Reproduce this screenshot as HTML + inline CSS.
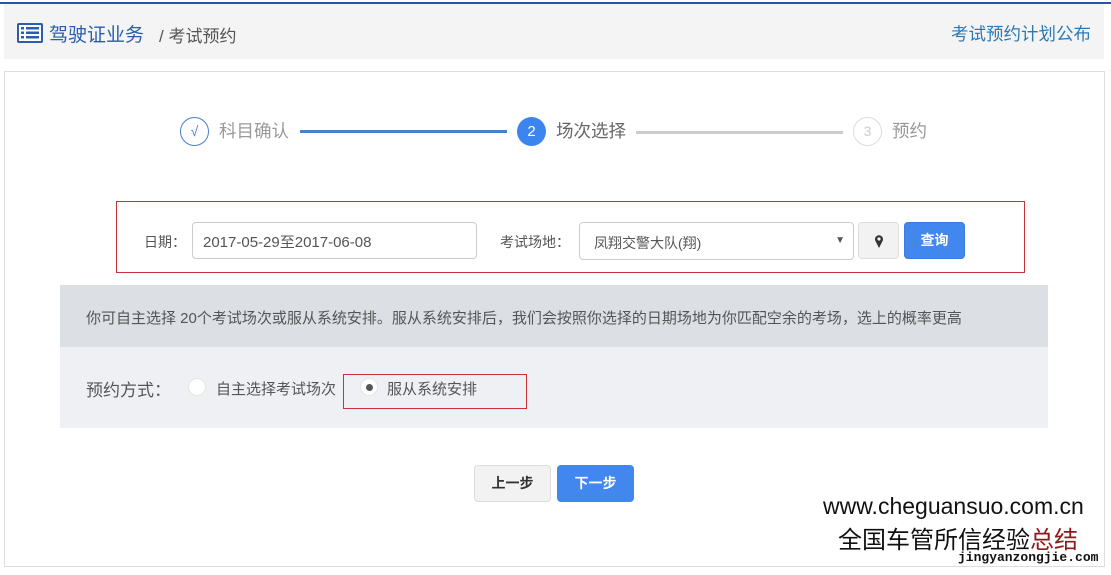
<!DOCTYPE html>
<html><head><meta charset="utf-8"><style>
*{margin:0;padding:0;box-sizing:border-box}
body{width:1111px;height:575px;background:#fff;position:relative;overflow:hidden;font-family:"Liberation Sans","Noto Sans CJK SC",sans-serif;color:#555}
.a{position:absolute}
.t{position:absolute;white-space:nowrap}
</style></head><body>
<div class="a" style="left:0;top:2px;width:1111px;height:2px;background:#2a56a0"></div>
<div class="a" style="left:4px;top:4px;width:1100px;height:55px;background:#f4f4f4"></div>
<svg class="a" style="left:16px;top:22px" width="28" height="22" viewBox="0 0 28 22"><rect x="1" y="1" width="26" height="20" rx="2" fill="#2a5cb0"/><rect x="3" y="3" width="22" height="16" fill="#fff"/><g fill="#2a5cb0"><rect x="5" y="5" width="3" height="2.5"/><rect x="10" y="5" width="13" height="2.5"/><rect x="5" y="9.5" width="3" height="2.5"/><rect x="10" y="9.5" width="13" height="2.5"/><rect x="5" y="14" width="3" height="2.5"/><rect x="10" y="14" width="13" height="2.5"/></g></svg>
<div class="t" style="left:49px;top:20px;font-size:19px;color:#2a5cb0">驾驶证业务</div>
<div class="t" style="left:159px;top:22px;font-size:17px;color:#555">/ 考试预约</div>
<div class="t" style="left:951px;top:21px;font-size:17.5px;color:#2a7ab8">考试预约计划公布</div>

<div class="a" style="left:4px;top:71px;width:1101px;height:496px;border:1px solid #ddd"></div>

<div class="a" style="left:180px;top:117px;width:29px;height:29px;border:1px solid #4a7fd0;border-radius:50%;color:#4a7fd0;font-size:14px;text-align:center;line-height:27px">√</div>
<div class="t" style="left:219px;top:118px;font-size:17.5px;color:#999">科目确认</div>
<div class="a" style="left:300px;top:130px;width:207px;height:3px;background:#4a7fd0"></div>
<div class="a" style="left:517px;top:117px;width:29px;height:29px;background:#3d85ee;border-radius:50%;color:#fff;font-size:15px;text-align:center;line-height:29px">2</div>
<div class="t" style="left:556px;top:118px;font-size:17.5px;color:#666">场次选择</div>
<div class="a" style="left:636px;top:131px;width:207px;height:3px;background:#ccc"></div>
<div class="a" style="left:853px;top:117px;width:29px;height:29px;border:1px solid #ddd;border-radius:50%;color:#ccc;font-size:14px;text-align:center;line-height:27px">3</div>
<div class="t" style="left:892px;top:118px;font-size:17.5px;color:#999">预约</div>

<div class="a" style="left:116px;top:201px;width:909px;height:72px;border:1px solid #c8333a"></div>
<div class="t" style="left:144px;top:232px;font-size:14px;color:#555">日期：</div>
<div class="a" style="left:192px;top:222px;width:285px;height:37px;border:1px solid #ccc;border-radius:4px;font-size:15px;color:#555;padding:8px 10px">2017-05-29至2017-06-08</div>
<div class="t" style="left:500px;top:232px;font-size:14px;color:#555">考试场地：</div>
<div class="a" style="left:579px;top:222px;width:275px;height:38px;border:1px solid #ccc;border-radius:4px;font-size:14px;color:#555;padding:10px 14px">凤翔交警大队(翔)<span style="position:absolute;right:8px;top:12px;font-size:10px">▼</span></div>
<div class="a" style="left:858px;top:222px;width:41px;height:37px;border:1px solid #ddd;background:#f2f2f2;border-radius:4px"><svg style="position:absolute;left:15px;top:11px" width="10" height="15" viewBox="0 0 10 15"><path d="M5 14L1.2 6.5A4 4 0 1 1 8.8 6.5Z" fill="#333"/><circle cx="5" cy="5" r="1.6" fill="#f2f2f2"/></svg></div>
<div class="a" style="left:904px;top:222px;width:61px;height:37px;background:#4287ee;border:1px solid #3a7bdc;border-radius:4px;color:#fff;font-size:14px;font-weight:bold;text-align:center;line-height:35px">查询</div>

<div class="a" style="left:60px;top:285px;width:988px;height:62px;background:#dcdfe4"></div>
<div class="t" style="left:86px;top:307px;font-size:15px;color:#555">你可自主选择 20个考试场次或服从系统安排。服从系统安排后，我们会按照你选择的日期场地为你匹配空余的考场，选上的概率更高</div>
<div class="a" style="left:60px;top:347px;width:988px;height:81px;background:#eef0f3"></div>
<div class="t" style="left:86px;top:376px;font-size:17px;color:#555">预约方式：</div>
<div class="a" style="left:188px;top:378px;width:18px;height:18px;border-radius:50%;background:#fff;border:1px solid #e5e5e5"></div>
<div class="t" style="left:216px;top:378px;font-size:15px;color:#555">自主选择考试场次</div>
<div class="a" style="left:343px;top:374px;width:184px;height:35px;border:1px solid #c8333a"></div>
<div class="a" style="left:360px;top:378px;width:18px;height:18px;border-radius:50%;background:#fff;border:1px solid #e5e5e5"></div>
<div class="a" style="left:366px;top:384px;width:7px;height:7px;border-radius:50%;background:#555"></div>
<div class="t" style="left:387px;top:378px;font-size:15px;color:#555">服从系统安排</div>

<div class="a" style="left:474px;top:465px;width:77px;height:37px;border:1px solid #ddd;background:#f2f2f2;border-radius:4px;font-size:14px;font-weight:bold;color:#333;text-align:center;line-height:35px">上一步</div>
<div class="a" style="left:557px;top:465px;width:77px;height:37px;background:#4287ee;border-radius:4px;font-size:14px;font-weight:bold;color:#fff;text-align:center;line-height:37px">下一步</div>

<div class="t" style="left:823px;top:493px;font-size:23px;color:#111">www.cheguansuo.com.cn</div>
<div class="t" style="left:838px;top:520px;font-size:24px;color:#111">全国车管所信经验<span style="color:#8b1a1a">总结</span></div>
<div class="t" style="left:958px;top:550px;font-size:13px;color:#111;font-family:'Liberation Mono',monospace;font-weight:bold">jingyanzongjie.com</div>
</body></html>
